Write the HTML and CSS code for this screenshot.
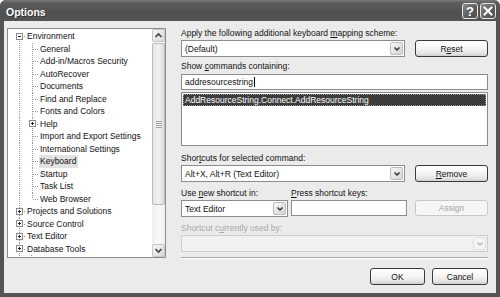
FILE: index.html
```html
<!DOCTYPE html>
<html>
<head>
<meta charset="utf-8">
<title>Options</title>
<link rel="stylesheet" href="styles.css">
</head>
<body>
<div class="window">
  <div class="titlebar">
    <span class="title">Options</span>
    <div class="caption-btns">
      <span class="cbtn help">?</span>
      <span class="cbtn close"><svg width="10" height="10" viewBox="0 0 10 10"><path d="M1.5 1.5L8.5 8.5M8.5 1.5L1.5 8.5" stroke="#fff" stroke-width="2" stroke-linecap="square"/></svg></span>
    </div>
  </div>
  <div class="client">
    <div class="main">
      <div class="tree">
        <div class="tree-items">
          <div class="node"><span class="g d"><svg class="box" width="7" height="7" viewBox="0 0 7 7"><rect x=".5" y=".5" width="6" height="6" fill="#fff" stroke="#8a8a8a"/><path d="M2 3.5H5" stroke="#222"/></svg></span><span class="txt">Environment</span></div>
          <div class="node"><span class="g v"></span><span class="g t"></span><span class="txt">General</span></div>
          <div class="node"><span class="g v"></span><span class="g t"></span><span class="txt">Add-in/Macros Security</span></div>
          <div class="node"><span class="g v"></span><span class="g t"></span><span class="txt">AutoRecover</span></div>
          <div class="node"><span class="g v"></span><span class="g t"></span><span class="txt">Documents</span></div>
          <div class="node"><span class="g v"></span><span class="g t"></span><span class="txt">Find and Replace</span></div>
          <div class="node"><span class="g v"></span><span class="g t"></span><span class="txt">Fonts and Colors</span></div>
          <div class="node"><span class="g v"></span><span class="g t"><svg class="box" width="7" height="7" viewBox="0 0 7 7"><rect x=".5" y=".5" width="6" height="6" fill="#fff" stroke="#8a8a8a"/><path d="M2 3.5H5M3.5 2V5" stroke="#222"/></svg></span><span class="txt">Help</span></div>
          <div class="node"><span class="g v"></span><span class="g t"></span><span class="txt">Import and Export Settings</span></div>
          <div class="node"><span class="g v"></span><span class="g t"></span><span class="txt">International Settings</span></div>
          <div class="node"><span class="g v"></span><span class="g t"></span><span class="txt sel">Keyboard</span></div>
          <div class="node"><span class="g v"></span><span class="g t"></span><span class="txt">Startup</span></div>
          <div class="node"><span class="g v"></span><span class="g t"></span><span class="txt">Task List</span></div>
          <div class="node"><span class="g v"></span><span class="g l"></span><span class="txt">Web Browser</span></div>
          <div class="node"><span class="g t"><svg class="box" width="7" height="7" viewBox="0 0 7 7"><rect x=".5" y=".5" width="6" height="6" fill="#fff" stroke="#8a8a8a"/><path d="M2 3.5H5M3.5 2V5" stroke="#222"/></svg></span><span class="txt">Projects and Solutions</span></div>
          <div class="node"><span class="g t"><svg class="box" width="7" height="7" viewBox="0 0 7 7"><rect x=".5" y=".5" width="6" height="6" fill="#fff" stroke="#8a8a8a"/><path d="M2 3.5H5M3.5 2V5" stroke="#222"/></svg></span><span class="txt">Source Control</span></div>
          <div class="node"><span class="g t"><svg class="box" width="7" height="7" viewBox="0 0 7 7"><rect x=".5" y=".5" width="6" height="6" fill="#fff" stroke="#8a8a8a"/><path d="M2 3.5H5M3.5 2V5" stroke="#222"/></svg></span><span class="txt">Text Editor</span></div>
          <div class="node"><span class="g t"><svg class="box" width="7" height="7" viewBox="0 0 7 7"><rect x=".5" y=".5" width="6" height="6" fill="#fff" stroke="#8a8a8a"/><path d="M2 3.5H5M3.5 2V5" stroke="#222"/></svg></span><span class="txt">Database Tools</span></div>
          <div class="node"><span class="g v"></span><span class="g stub"></span></div>
        </div>
        <div class="vscroll">
          <span class="sbtn"><svg width="9" height="7" viewBox="0 0 9 7"><path d="M1.5 5L4.5 2L7.5 5" fill="none" stroke="#444" stroke-width="1.6"/></svg></span>
          <span class="thumb"><span class="grip"></span></span>
          <span class="track"></span>
          <span class="sbtn"><svg width="9" height="7" viewBox="0 0 9 7"><path d="M1.5 2L4.5 5L7.5 2" fill="none" stroke="#444" stroke-width="1.6"/></svg></span>
        </div>
      </div>
      <div class="panel">
        <div class="lbl">Apply the following additional keyboard <u>m</u>apping scheme:</div>
        <div class="row r1">
          <div class="combo w224"><span class="val">(Default)</span><span class="arrow"><svg width="8" height="6" viewBox="0 0 8 6"><path d="M1.5 1.5L4 4L6.5 1.5" fill="none" stroke="#333" stroke-width="1.5"/></svg></span></div>
          <div class="btn w73">R<u>e</u>set</div>
        </div>
        <div class="lbl l2">Show <u>c</u>ommands containing:</div>
        <div class="input full">addresourcestring<span class="caret"></span></div>
        <div class="list">
          <div class="item selected">AddResourceString.Connect.AddResourceString</div>
        </div>
        <div class="lbl l3">Shor<u>t</u>cuts for selected command:</div>
        <div class="row r1">
          <div class="combo w224"><span class="val">Alt+X, Alt+R (Text Editor)</span><span class="arrow"><svg width="8" height="6" viewBox="0 0 8 6"><path d="M1.5 1.5L4 4L6.5 1.5" fill="none" stroke="#333" stroke-width="1.5"/></svg></span></div>
          <div class="btn w73"><u>R</u>emove</div>
        </div>
        <div class="lblrow">
          <span class="lbl c1">Use <u>n</u>ew shortcut in:</span>
          <span class="lbl"><u>P</u>ress shortcut keys:</span>
        </div>
        <div class="row r3">
          <div class="combo w107"><span class="val">Text Editor</span><span class="arrow"><svg width="8" height="6" viewBox="0 0 8 6"><path d="M1.5 1.5L4 4L6.5 1.5" fill="none" stroke="#333" stroke-width="1.5"/></svg></span></div>
          <div class="input w116"></div>
          <div class="btn w73 disabled">Assign</div>
        </div>
        <div class="lbl l5 dis">Shortcut c<u>u</u>rrently used by:</div>
        <div class="combo full disabled"><span class="val"></span><span class="arrow"><svg width="8" height="6" viewBox="0 0 8 6"><path d="M1.5 1.5L4 4L6.5 1.5" fill="none" stroke="#b8b8b8" stroke-width="1.5"/></svg></span></div>
        <div class="sep"></div>
      </div>
    </div>
    <div class="footer">
      <div class="btn ok">OK</div>
      <div class="btn cancel">Cancel</div>
    </div>
  </div>
</div>
</body>
</html>
```
FILE: styles.css
```css
* { box-sizing: border-box; }
html, body { margin: 0; padding: 0; background: #fff; }
body {
  font-family: "Liberation Sans", Arial, sans-serif;
  font-size: 8.5px;
  color: #111;
}
.window {
  width: 500px;
  height: 297px;
  background: #545454;
  border-radius: 6px 6px 0 0;
  display: flex;
  flex-direction: column;
}
.titlebar {
  height: 21px;
  flex: none;
  display: flex;
  align-items: flex-start;
  justify-content: space-between;
  padding: 3px 4px 0 6px;
  border-radius: 6px 6px 0 0;
  background: linear-gradient(#7a7a7a 0, #5c5c5c 3px, #505050 60%, #545454 100%);
}
.title {
  color: #fff;
  font-weight: bold;
  font-size: 10.5px;
  line-height: 18px;
  text-shadow: 1px 1px 0 #333;
}
.caption-btns { display: flex; gap: 2px; }
.cbtn {
  width: 16px;
  height: 16px;
  border: 1px solid #e8e8e8;
  border-radius: 3px;
  background: linear-gradient(135deg, #8a8a8a, #5a5a5a 60%, #4e4e4e);
  color: #fff;
  display: flex;
  align-items: center;
  justify-content: center;
  font-weight: bold;
  font-size: 13px;
  line-height: 1;
}
.cbtn.close { background: linear-gradient(135deg, #888, #5e5e5e 60%, #505050); }
.client {
  flex: 1;
  margin: 0 4px 4px 4px;
  background: #ebebeb;
  padding: 7px 8px 0 3px;
  display: flex;
  flex-direction: column;
}
.main { display: flex; align-items: flex-start; }

/* tree */
.tree {
  width: 159px;
  height: 230px;
  border: 1px solid #8c8c8c;
  background: #fff;
  display: flex;
  flex: none;
}
.tree-items {
  flex: 1;
  padding: 1px 0 0 5px;
  overflow: hidden;
}
.node {
  display: flex;
  height: 12.5px;
  align-items: stretch;
}
.g {
  width: 13px;
  flex: none;
  display: flex;
  align-items: center;
}
.g .box { margin-left: 3px; display: block; }
.g.v {
  background: repeating-linear-gradient(to bottom, #9a9a9a 0 1px, transparent 1px 2px) 6px 0 / 1px 100% no-repeat;
}
.g.t {
  background:
    repeating-linear-gradient(to bottom, #9a9a9a 0 1px, transparent 1px 2px) 6px 0 / 1px 100% no-repeat,
    repeating-linear-gradient(to right, #9a9a9a 0 1px, transparent 1px 2px) 7px 6px / 6px 1px no-repeat;
}
.g.l {
  background:
    repeating-linear-gradient(to bottom, #9a9a9a 0 1px, transparent 1px 2px) 6px 0 / 1px 6px no-repeat,
    repeating-linear-gradient(to right, #9a9a9a 0 1px, transparent 1px 2px) 7px 6px / 6px 1px no-repeat;
}
.g.d {
  background:
    repeating-linear-gradient(to bottom, #9a9a9a 0 1px, transparent 1px 2px) 6px 7px / 1px 6px no-repeat,
    repeating-linear-gradient(to right, #9a9a9a 0 1px, transparent 1px 2px) 7px 6px / 6px 1px no-repeat;
}
.g.stub {
  background: repeating-linear-gradient(to bottom, #9a9a9a 0 1px, transparent 1px 2px) 5px 0 / 1px 3px no-repeat;
}
.txt {
  padding: 0 2px 0 1px;
  line-height: 12.5px;
  white-space: nowrap;
}
.txt.sel { background: #e2e2e2; }

/* scrollbar */
.vscroll {
  width: 13px;
  flex: none;
  display: flex;
  flex-direction: column;
  background: linear-gradient(to right, #eeeeee, #f8f8f8 50%, #eeeeee);
}
.sbtn {
  height: 13px;
  flex: none;
  border: 1px solid #c6c6c6;
  border-radius: 2px;
  background: linear-gradient(135deg, #f6f6f6, #d8d8d8);
  display: flex;
  align-items: center;
  justify-content: center;
}
.thumb {
  height: 162px;
  margin-top: 1px;
  flex: none;
  border: 1px solid #bcbcbc;
  border-radius: 2px;
  background: linear-gradient(to right, #e4e4e4, #f2f2f2 50%, #dcdcdc);
  display: flex;
  align-items: center;
  justify-content: center;
}
.grip {
  width: 6px;
  height: 7px;
  background: repeating-linear-gradient(to bottom, #9c9c9c 0 1px, #f8f8f8 1px 2px);
}
.track { flex: 1; }

/* right panel */
.panel {
  width: 307px;
  margin-left: 15px;
  display: flex;
  flex-direction: column;
  flex: none;
}
.lbl { line-height: 11px; height: 11px; white-space: nowrap; }
.lbl.l2 { margin-top: 4px; }
.lbl.l3 { margin-top: 7px; }
.lbl.l5 { margin-top: 6px; }
.lbl.dis { color: #a9a9a9; }
.lblrow { display: flex; margin-top: 6px; }
.lblrow .c1 { width: 110px; }
.row { display: flex; align-items: flex-start; margin-top: 1px; }
.row.r1 { gap: 10px; }
.row.r3 { gap: 3px; }
.row.r3 .btn { margin-left: 5px; height: 16px; }
.w224 { width: 224px; }
.w73 { width: 73px; }
.w107 { width: 107px; }
.w116 { width: 116px; }
.full { width: 307px; }

.combo {
  height: 17px;
  border: 1px solid #8c8c8c;
  background: #fff;
  display: flex;
  align-items: center;
  padding-right: 1px;
}
.combo .val { flex: 1; padding-left: 3px; white-space: nowrap; overflow: hidden; }
.combo .arrow {
  width: 13px;
  height: 13px;
  border: 1px solid #bdbdbd;
  border-radius: 2px;
  background: linear-gradient(135deg, #f8f8f8, #d4d4d4);
  display: flex;
  align-items: center;
  justify-content: center;
}
.combo.disabled { border-color: #cdcdcd; background: #f1f1f1; margin-top: 1px; }
.combo.disabled .arrow { border-color: #e0e0e0; background: #f4f4f4; }

.input {
  height: 16px;
  border: 1px solid #8c8c8c;
  background: #fff;
  display: flex;
  align-items: center;
  padding-left: 3px;
}
.input.full { margin-top: 2px; }
.caret { width: 1px; height: 10px; background: #000; margin-left: 1px; }
.list {
  margin-top: 2px;
  height: 54px;
  border: 1px solid #8c8c8c;
  background: #fff;
  padding: 1px;
}
.item.selected {
  background: #3c3c3c;
  color: #fff;
  height: 12px;
  line-height: 12px;
  padding-left: 2px;
  outline: 1px dotted #9a9a9a;
  outline-offset: -1px;
}

.btn {
  height: 17px;
  border: 1px solid #3a3a3a;
  border-radius: 3px;
  background: linear-gradient(#ffffff 0, #f4f4f4 50%, #e2e2e2 85%, #cfcfcf 100%);
  display: flex;
  align-items: center;
  justify-content: center;
  color: #111;
  white-space: nowrap;
}
.btn.disabled { border-color: #c8c8c8; background: #f6f6f6; color: #a6a6a6; }

.sep {
  margin-top: 5px;
  height: 2px;
  border-top: 1px solid #a6a6a6;
  border-bottom: 1px solid #ffffff;
}
.footer {
  margin-top: 9px;
  display: flex;
  justify-content: flex-end;
  gap: 7px;
}
.btn.ok { width: 55px; }
.btn.cancel { width: 56px; }
```
